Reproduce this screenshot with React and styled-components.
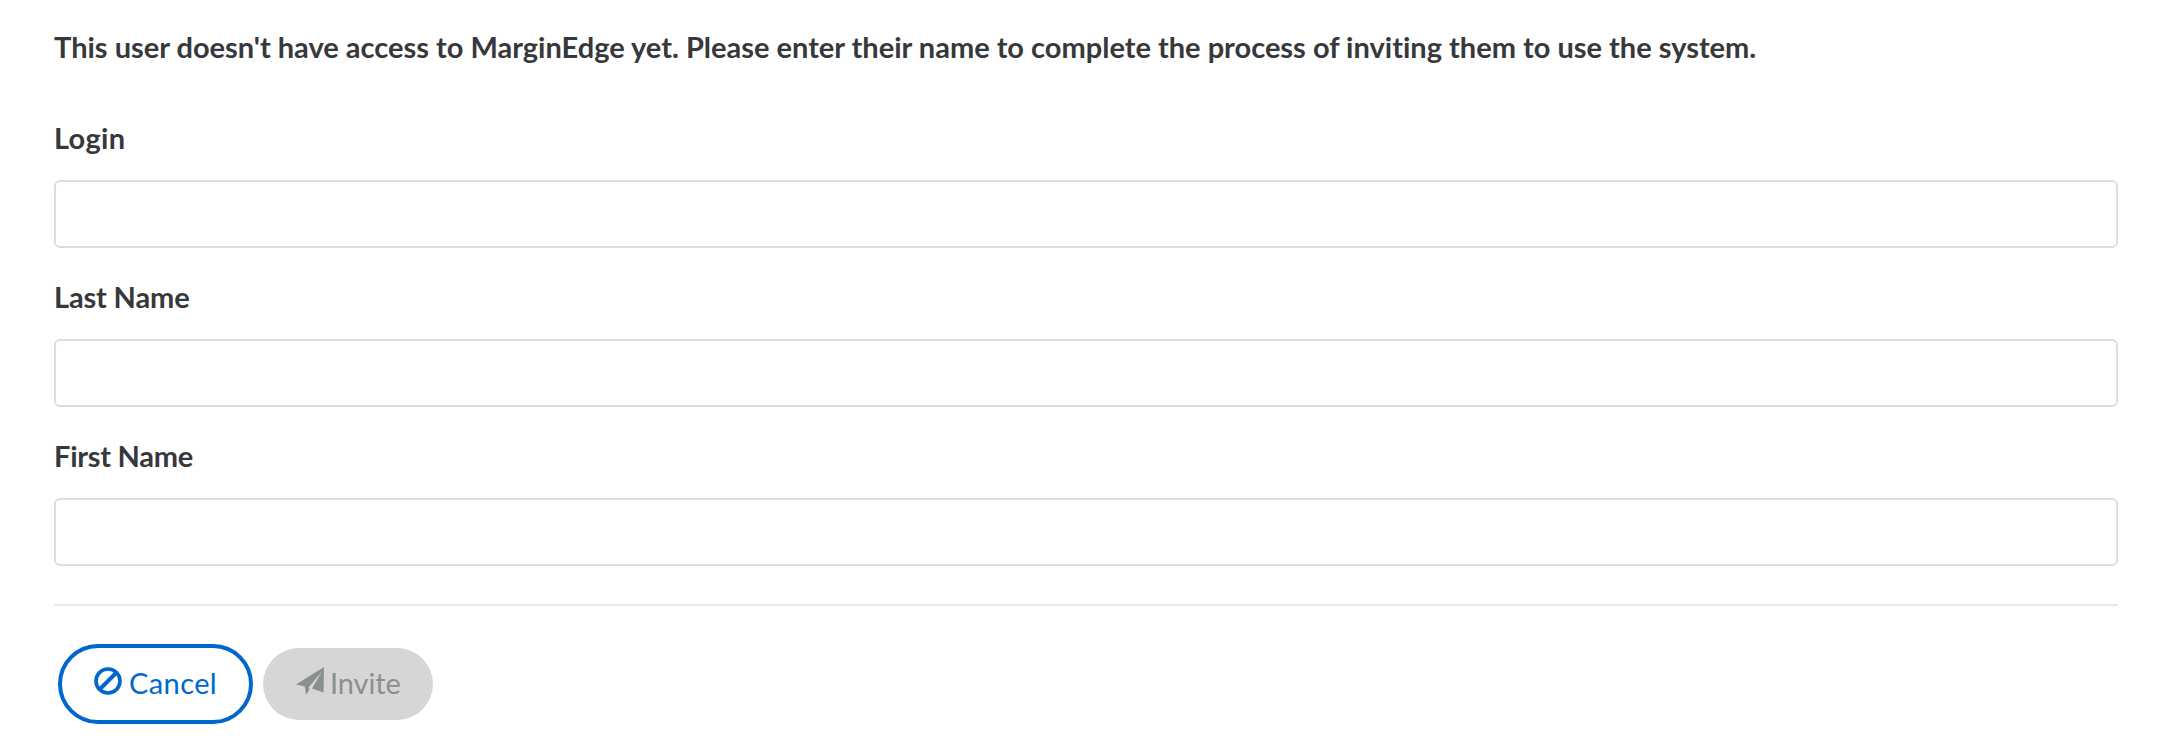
import styled, { createGlobalStyle } from "styled-components";

const fields = [
  { name: "login", label: "Login", spacing: "0.3px" },
  { name: "lastName", label: "Last Name", spacing: "-0.15px" },
  { name: "firstName", label: "First Name", spacing: "-0.25px" },
];

const BanIcon = () => (
  <Icon viewBox="0 0 28 28" aria-hidden="true">
    <circle cx="14" cy="14" r="12" fill="none" stroke="currentColor" strokeWidth="3.7" />
    <path d="M6 22L22 6" stroke="currentColor" strokeWidth="4" />
  </Icon>
);

const SendIcon = () => (
  <Icon viewBox="0 0 28 28" aria-hidden="true">
    <path fill="currentColor" d="M28 0L0 17.5L8.8 19.5L10 28L13.5 22.5L12.5 20.5L26 4.5L16 21.5L27.5 25.5Z" />
  </Icon>
);

const App = () => {
  return (
    <Page>
      <GlobalStyle />
      <Message>
        This user doesn't have access to MarginEdge yet. Please enter their name to complete the process of inviting them to use the system.
      </Message>

      {fields.map((field) => (
        <FormGroup key={field.name}>
          <Label htmlFor={field.name} $spacing={field.spacing}>{field.label}</Label>
          <Input id={field.name} name={field.name} type="text" />
        </FormGroup>
      ))}

      <Divider />

      <Actions>
        <CancelButton type="button">
          <BanIcon />
          <ButtonText $spacing="0.4px">Cancel</ButtonText>
        </CancelButton>
        <InviteButton type="button" disabled>
          <SendIcon />
          <ButtonText $spacing="-0.1px">Invite</ButtonText>
        </InviteButton>
      </Actions>
    </Page>
  );
};

export default App;

const GlobalStyle = createGlobalStyle`
  * {
    box-sizing: border-box;
  }

  body {
    margin: 0;
    background: #fff;
    color: #37383c;
    font-family: Lato, "Open Sans", sans-serif;
    font-variant-ligatures: none;
  }
`;

const Page = styled.div`
  padding: 27px 40px 0 54px;
`;

const Message = styled.p`
  margin: 0 0 51px;
  font-size: 29px;
  font-weight: 700;
  line-height: 40px;
  white-space: nowrap;
`;

const FormGroup = styled.div`
  margin-bottom: 29px;
`;

const Label = styled.label`
  display: block;
  height: 40px;
  margin-bottom: 22px;
  font-size: 29px;
  font-weight: 700;
  line-height: 40px;
  letter-spacing: ${(props) => props.$spacing};
`;

const Input = styled.input`
  display: block;
  width: 100%;
  height: 68px;
  padding: 12px 24px;
  border: 2px solid #dadfe4;
  border-radius: 6px;
  background: #fff;
  color: inherit;
  font: inherit;
  font-size: 28px;
  outline: none;
`;

const Divider = styled.hr`
  height: 2px;
  margin: 38px 0;
  border: 0;
  background: #e4e8ec;
`;

const Actions = styled.div`
  display: flex;
  align-items: center;
  gap: 10px;
  padding-left: 4px;
`;

const Icon = styled.svg`
  flex: none;
  width: 28px;
  height: 28px;
  margin-bottom: 6px;
`;

const Button = styled.button`
  display: flex;
  align-items: center;
  border-radius: 40px;
  font-family: inherit;
  font-size: 29px;
  line-height: 40px;
`;

const ButtonText = styled.span`
  margin-bottom: 2px;
  letter-spacing: ${(props) => props.$spacing};
`;

const CancelButton = styled(Button)`
  width: 195px;
  height: 80px;
  padding: 0 0 0 32px;
  gap: 7px;
  border: 4px solid #0067cc;
  background: #fff;
  color: #0067cc;
`;

const InviteButton = styled(Button)`
  width: 170px;
  height: 72px;
  padding: 0 0 0 33px;
  gap: 6px;
  border: 0;
  background: #d6d6d6;
  color: #8a8f8f;
`;
